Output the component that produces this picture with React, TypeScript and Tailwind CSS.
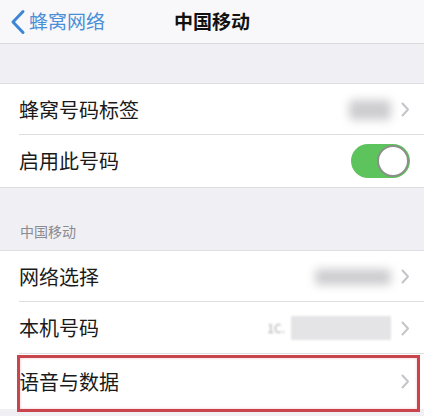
import React from 'react';

const Chevron = () => (
  <svg width="9" height="15" viewBox="0 0 9 15" className="shrink-0">
    <path d="M1.5 1.5 L7 7.5 L1.5 13.5" fill="none" stroke="#c5c5c9" strokeWidth="2" strokeLinecap="round" strokeLinejoin="round" />
  </svg>
);

const Row: React.FC<{ label: string; children?: React.ReactNode; last?: boolean; h?: string }> = ({ label, children, last, h = 'h-[51px]' }) => (
  <div className={`relative flex items-center ${h} bg-white pl-[19px] pr-[14px]`}>
    <span className="text-[20px] text-[#1a1a1a]">{label}</span>
    <div className="ml-auto flex items-center gap-[10px]">{children}</div>
    {!last && <div className="absolute bottom-0 left-[19px] right-0 h-px bg-[#dedee2]" />}
  </div>
);

const App: React.FC = () => {
  return (
    <div
      className="w-[424px] h-[416px] overflow-hidden bg-[#efeff4] flex flex-col"
      style={{ fontFamily: '"Noto Sans CJK SC", "Noto Sans", sans-serif' }}
    >
      {/* 导航栏 */}
      <header className="h-[44px] shrink-0 bg-[#f8f8fa] border-b border-[#d9d9de] grid grid-cols-[1fr_auto_1fr] items-center">
        <div className="flex items-center pl-[9px] gap-[2px] text-[#4a8ed8]">
          <svg width="18" height="26" viewBox="0 0 18 26">
            <path d="M14 2.5 L4 13 L14 23.5" fill="none" stroke="#3d86d6" strokeWidth="3" strokeLinecap="round" strokeLinejoin="round" />
          </svg>
          <span className="text-[19px]">蜂窝网络</span>
        </div>
        <h1 className="text-[19px] font-bold text-[#111] px-2">中国移动</h1>
        <div />
      </header>

      <div className="h-[39px] shrink-0" />

      <div className="border-y border-[#dedee2]">
        <Row label="蜂窝号码标签">
          <div className="w-[42px] h-[20px] rounded bg-[#cdcdd0] blur-[5px]" />
          <Chevron />
        </Row>
        <Row label="启用此号码" last h="h-[52px]">
          <div className="w-[59px] h-[34px] rounded-full bg-[#5cc35d] flex items-center justify-end pr-[1px]">
            <div className="w-[32px] h-[32px] rounded-full bg-white border-2 border-[#8a8f88]" />
          </div>
        </Row>
      </div>

      <div className="h-[62px] shrink-0 flex items-end pl-[20px] pb-[8px]">
        <span className="text-[14px] text-[#8b8b90]">中国移动</span>
      </div>

      <div className="border-t border-[#dedee2] bg-white">
        <Row label="网络选择">
          <div className="w-[76px] h-[16px] rounded bg-[#cdcdd0] blur-[5px]" />
          <Chevron />
        </Row>
        <Row label="本机号码" h="h-[52px]">
          <div className="flex items-center">
            <span className="text-[12px] text-[#aaa] blur-[1px] mr-[6px]">1C.</span>
            <div className="w-[100px] h-[24px] bg-[#e4e4e6] blur-[1px]" />
          </div>
          <Chevron />
        </Row>
        <Row label="语音与数据" last h="h-[55px]">
          <Chevron />
          <div className="absolute left-[17px] right-[4px] top-[1px] h-[57px] border-[3px] border-[#c9454d] shadow-[inset_0_0_3px_#f4c0c6]" />
        </Row>
      </div>
    </div>
  );
};

export default App;
